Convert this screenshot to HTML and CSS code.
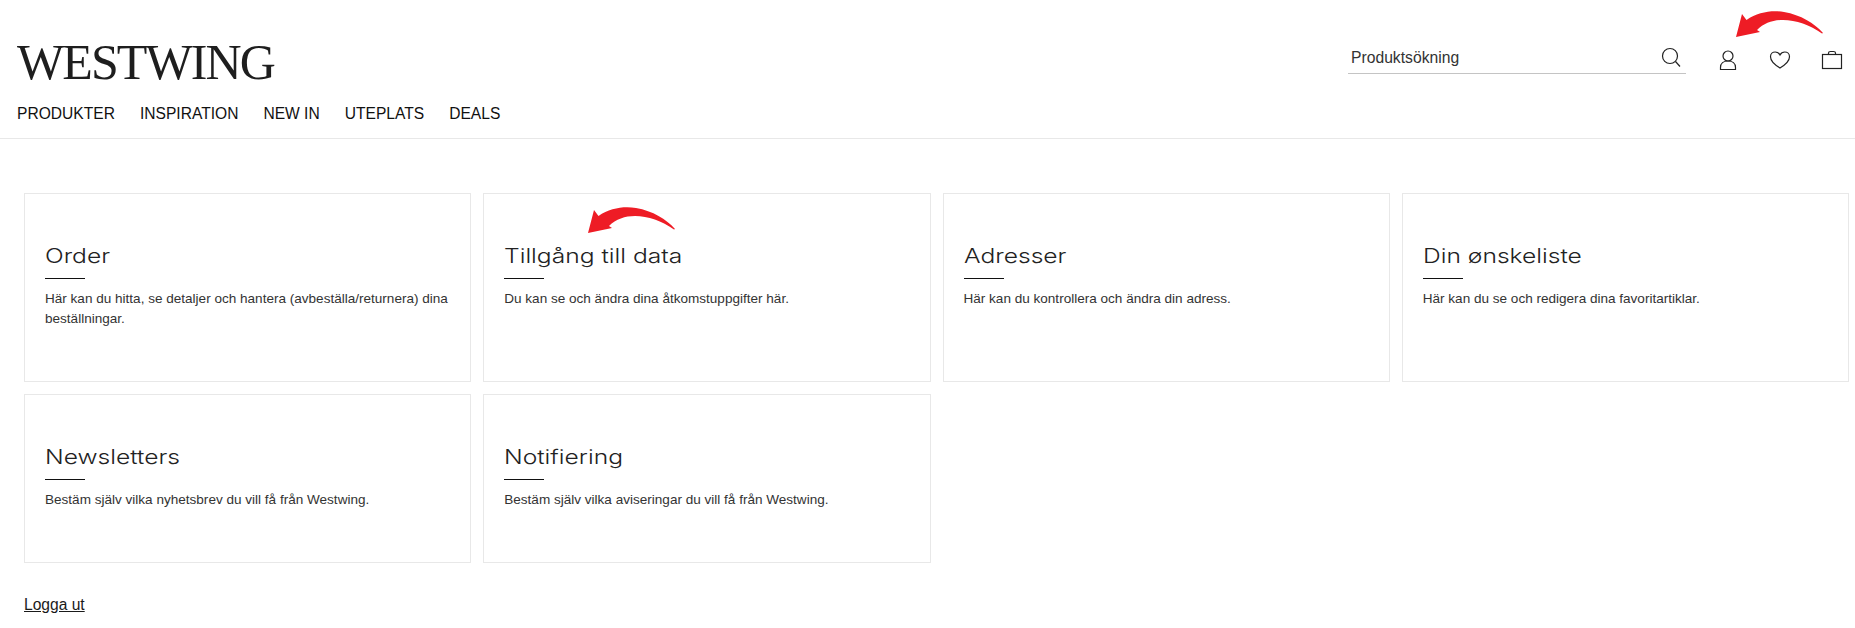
FILE: index.html
```html
<!DOCTYPE html>
<html lang="sv">
<head>
<meta charset="utf-8">
<title>Westwing</title>
<link rel="stylesheet" href="styles.css">
</head>
<body>
<svg class="defs" width="0" height="0" aria-hidden="true">
  <symbol id="arrow" viewBox="0 0 90 28">
    <path d="M0 26 L6 3 L10.5 9 C22 1 36 -1 48 1 C65 4 78 12 87 22 L86 22.500 C74 14 60 9 47 9 C37 9 28 12 21 19 L24 21 Z" fill="#ee1c25"/>
  </symbol>
</svg>
<header class="site-header">
  <div class="header-top">
    <a class="logo">WESTWING</a>
    <div class="actions">
      <div class="search">
        <span class="search-text">Produktsökning</span>
        <svg class="icon" viewBox="0 0 24 24"><circle cx="11" cy="10" r="7.500"/><path d="M16.500 15.500 L21 20.500"/></svg>
      </div>
      <svg class="icon" viewBox="0 0 24 24"><circle cx="12" cy="8" r="5"/><path d="M4.500 21.500 V19.500 C4.500 15.500 7.500 13 12 13 C16.500 13 19.500 15.500 19.500 19.500 V21.500 Z"/></svg>
      <svg class="icon" viewBox="0 0 24 24"><path d="M12 20 C7 17 2.500 13 2.500 8.800 C2.500 5.800 4.800 4 7.200 4 C9.200 4 11 5 12 7 C13 5 14.800 4 16.800 4 C19.200 4 21.500 5.800 21.500 8.800 C21.500 13 17 17 12 20 Z"/></svg>
      <svg class="icon" viewBox="0 0 24 24"><rect x="2.500" y="6.500" width="19" height="14"/><path d="M8.500 6.500 V5 C8.500 3.800 9.500 3.500 10.500 3.500 H13.500 C14.500 3.500 15.500 3.800 15.500 5 V6.500"/></svg>
    </div>
  </div>
  <nav class="nav">
    <a>PRODUKTER</a>
    <a>INSPIRATION</a>
    <a>NEW IN</a>
    <a>UTEPLATS</a>
    <a>DEALS</a>
  </nav>
</header>
<main class="main">
  <section class="grid">
    <article class="card"><h2 class="card-title">Order</h2><p class="card-text">Här kan du hitta, se detaljer och hantera (avbeställa/returnera) dina beställningar.</p></article>
    <article class="card"><h2 class="card-title">Tillgång till data</h2><p class="card-text">Du kan se och ändra dina åtkomstuppgifter här.</p></article>
    <article class="card"><h2 class="card-title">Adresser</h2><p class="card-text">Här kan du kontrollera och ändra din adress.</p></article>
    <article class="card"><h2 class="card-title">Din ønskeliste</h2><p class="card-text">Här kan du se och redigera dina favoritartiklar.</p></article>
    <article class="card"><h2 class="card-title">Newsletters</h2><p class="card-text">Bestäm själv vilka nyhetsbrev du vill få från Westwing.</p></article>
    <article class="card"><h2 class="card-title">Notifiering</h2><p class="card-text">Bestäm själv vilka aviseringar du vill få från Westwing.</p></article>
  </section>
  <a class="logout">Logga ut</a>
</main>
<svg class="arrow arrow-top"><use href="#arrow"/></svg>
<svg class="arrow arrow-card"><use href="#arrow"/></svg>
</body>
</html>
```
FILE: styles.css
```css
* { box-sizing: border-box; }
html, body { margin: 0; padding: 0; }
body {
  position: relative;
  height: 628px;
  overflow: hidden;
  background: #fff;
  color: #1a1a1a;
  font-family: "Liberation Sans", Arial, sans-serif;
}
.defs { position: absolute; }
.site-header {
  padding: 37px 11px 14px 17px;
  border-bottom: 1px solid #e8e8e8;
}
.header-top {
  display: flex;
  justify-content: space-between;
  align-items: flex-start;
}
.logo {
  font-family: "Liberation Serif", serif;
  font-size: 50px;
  line-height: 50px;
  letter-spacing: -1.9px;
  color: #1e1e1e;
}
.actions {
  display: flex;
  align-items: flex-start;
  gap: 28px;
  margin-top: 11px;
}
.search {
  display: flex;
  justify-content: space-between;
  align-items: center;
  width: 338px;
  height: 26px;
  margin-right: 2px;
  padding: 0 3px 5px 3px;
  border-bottom: 1px solid #c4c4c4;
  font-size: 15.7px;
  color: #333;
}
.icon {
  display: block;
  width: 24px;
  height: 24px;
  flex: none;
  fill: none;
  stroke: #222;
  stroke-width: 1.2;
}
.nav {
  display: flex;
  gap: 25px;
  margin-top: 17px;
  font-size: 15.6px;
  line-height: 20px;
  color: #111;
}
.main { padding: 54px 6px 0 24px; }
.grid {
  display: grid;
  grid-template-columns: repeat(4, 1fr);
  gap: 12px;
}
.card {
  padding: 48px 20px 52px;
  border: 1px solid #e8e8e8;
}
.card-title {
  display: block;
  margin: 0;
  width: max-content;
  font-family: Inter, sans-serif;
  font-size: 20px;
  font-weight: 300;
  line-height: 28px;
  color: #222;
  transform: scaleX(1.23);
  transform-origin: left center;
}
.card-text {
  margin: 0;
  font-size: 13.55px;
  line-height: 20px;
  color: #333;
}
.card-title + .card-text::before {
  content: "";
  display: block;
  width: 40px;
  height: 1px;
  margin: 8px 0 10px;
  background: #111;
}
.logout {
  display: inline-block;
  margin-top: 32px;
  font-size: 15.6px;
  line-height: 20px;
  text-decoration: underline;
  color: #1a1a1a;
}
.arrow {
  position: absolute;
  width: 90px;
  height: 28px;
}
.arrow-top { left: 1736px; top: 11px; }
.arrow-card { left: 588px; top: 207px; }
```
